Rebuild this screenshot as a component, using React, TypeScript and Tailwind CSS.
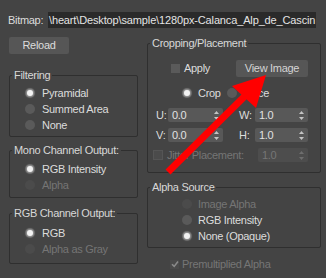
import React from 'react';

const Radio = ({ on = false, disabled = false }: { on?: boolean; disabled?: boolean }) => (
    <span
        className={`flex items-center justify-center w-[10px] h-[10px] rounded-full shrink-0 ${disabled ? 'bg-[#4b4b4b]' : 'bg-[#5a5a5a]'}`}
    >
        {on && <span className="w-[6px] h-[6px] rounded-full bg-[#f2f2f2] shadow-[0_0_2px_1px_rgba(255,255,255,0.45)]" />}
    </span>
);

const Spin = ({ value, w, disabled = false }: { value: string; w: string; disabled?: boolean }) => (
    <div
        className={`flex items-center h-[14px] rounded-[2px] pl-[4px] pr-[4px] ${w} ${disabled ? 'bg-[#4d4d4d] text-[#767676]' : 'bg-[#585858] text-[#e2e2e2]'}`}
    >
        <span className="flex-1 leading-[14px]">{value}</span>
        <svg width="5" height="9" viewBox="0 0 5 9">
            <polygon points="2.5,0 5,3 0,3" fill={disabled ? '#6e6e6e' : '#c4c4c4'} />
            <polygon points="0,6 5,6 2.5,9" fill={disabled ? '#6e6e6e' : '#c4c4c4'} />
        </svg>
    </div>
);

const Group = ({ title, className, children }: { title: string; className: string; children: React.ReactNode }) => (
    <fieldset className={`border border-[#2f2f2f] rounded-[2px] ${className}`}>
        <legend className="ml-[2px] px-[2px] h-[13px] leading-[13px] text-[#d8d8d8]">{title}</legend>
        {children}
    </fieldset>
);

const Row = ({ children, dim = false }: { children: React.ReactNode; dim?: boolean }) => (
    <div className={`flex items-center h-[16px] ${dim ? 'text-[#757575]' : 'text-[#dcdcdc]'}`}>{children}</div>
);

export default function App() {
    return (
        <div className="relative w-[326px] h-[278px] overflow-hidden bg-[#444444] text-[11px] tracking-[-0.3px] text-[#dcdcdc] font-['Liberation_Sans',Arial,sans-serif]">
            {/* bitmap path */}
            <div className="flex items-center h-[16px] mt-[12px] pl-[8px]">
                <span className="w-[40px]">Bitmap:</span>
                <div className="w-[268px] h-[16px] bg-[#2a2a2a] pl-[1px] leading-[16px] whitespace-nowrap overflow-hidden tracking-[-0.14px] text-[#e4e4e4]">
                    \heart\Desktop\sample\1280px-Calanca_Alp_de_Cascin
                </div>
            </div>

            <div className="flex">
                {/* left column */}
                <div className="ml-[9px] w-[129px] flex flex-col">
                    <button className="mt-[9px] w-[60px] h-[17px] rounded-[2px] bg-[#565656] text-[#dcdcdc] leading-[17px]">
                        Reload
                    </button>

                    <Group title="Filtering" className="mt-[15px]">
                        <div className="pt-[3px] pb-[3px] pl-[15px]">
                            <Row><Radio on /><span className="ml-[7px]">Pyramidal</span></Row>
                            <Row><Radio /><span className="ml-[7px]">Summed Area</span></Row>
                            <Row><Radio /><span className="ml-[7px]">None</span></Row>
                        </div>
                    </Group>

                    <Group title="Mono Channel Output:" className="mt-[7px]">
                        <div className="pt-[4px] pb-[4px] pl-[15px]">
                            <Row><Radio on /><span className="ml-[7px]">RGB Intensity</span></Row>
                            <Row dim><Radio disabled /><span className="ml-[7px]">Alpha</span></Row>
                        </div>
                    </Group>

                    <Group title="RGB Channel Output:" className="mt-[9px]">
                        <div className="pt-[5px] pb-[6px] pl-[15px]">
                            <Row><Radio on /><span className="ml-[7px]">RGB</span></Row>
                            <Row dim><Radio disabled /><span className="ml-[7px]">Alpha as Gray</span></Row>
                        </div>
                    </Group>
                </div>

                {/* right column */}
                <div className="ml-[9px] w-[174px] flex flex-col">
                    <Group title="Cropping/Placement" className="mt-[9px]">
                        <div className="pt-[10px] pb-[10px]">
                            <div className="flex items-center h-[17px]">
                                <span className="ml-[23px] w-[9px] h-[9px] bg-[#5a5a5a]" />
                                <span className="ml-[4px]">Apply</span>
                                <button className="ml-auto mr-[12px] w-[72px] h-[17px] rounded-[2px] bg-[#565656] text-[#d4d4d4] leading-[17px]">
                                    View Image
                                </button>
                            </div>
                            <div className="flex items-center h-[16px] mt-[8px]">
                                <span className="ml-[34px]"><Radio on /></span>
                                <span className="ml-[6px] w-[29px]">Crop</span>
                                <Radio />
                                <span className="ml-[6px]">Place</span>
                            </div>
                            <div className="flex items-center h-[14px] mt-[7px]">
                                <span className="ml-[8px] w-[12px]">U:</span>
                                <Spin value="0.0" w="w-[55px]" />
                                <span className="ml-[16px] w-[16px]">W:</span>
                                <Spin value="1.0" w="w-[53px]" />
                            </div>
                            <div className="flex items-center h-[14px] mt-[6px]">
                                <span className="ml-[8px] w-[12px]">V:</span>
                                <Spin value="0.0" w="w-[55px]" />
                                <span className="ml-[16px] w-[16px]">H:</span>
                                <Spin value="1.0" w="w-[53px]" />
                            </div>
                            <div className="flex items-center h-[14px] mt-[6px] text-[#757575]">
                                <span className="ml-[5px] w-[10px] h-[10px] bg-[#4b4b4b] border border-[#555555]" />
                                <span className="ml-[4px]">Jitter Placement:</span>
                                <span className="ml-auto mr-[12px]">
                                    <Spin value="1.0" w="w-[50px]" disabled />
                                </span>
                            </div>
                        </div>
                    </Group>

                    <Group title="Alpha Source" className="mt-[8px]">
                        <div className="pt-[2px] pb-[3px] pl-[34px]">
                            <Row dim><Radio disabled /><span className="ml-[6px]">Image Alpha</span></Row>
                            <Row><Radio /><span className="ml-[6px]">RGB Intensity</span></Row>
                            <Row><Radio on /><span className="ml-[6px]">None (Opaque)</span></Row>
                        </div>
                    </Group>

                    <div className="flex items-center h-[14px] mt-[9px] text-[#767676]">
                        <span className="ml-[23px] flex items-center justify-center w-[9px] h-[9px] bg-[#4a4a4a]">
                            <svg width="8" height="8" viewBox="0 0 8 8">
                                <path d="M1 4.2 L3.2 6.4 L7 1.6" stroke="#8a8a8a" strokeWidth="1.6" fill="none" />
                            </svg>
                        </span>
                        <span className="ml-[3px]">Premultiplied Alpha</span>
                    </div>
                </div>
            </div>

            {/* red annotation arrow */}
            <svg className="absolute inset-0 pointer-events-none" width="326" height="278" viewBox="0 0 326 278">
                <line x1="168" y1="172" x2="248" y2="93" stroke="#ff0000" strokeWidth="7" />
                <polygon points="266,75 232,86 256,108" fill="#ff0000" />
            </svg>
        </div>
    );
}
